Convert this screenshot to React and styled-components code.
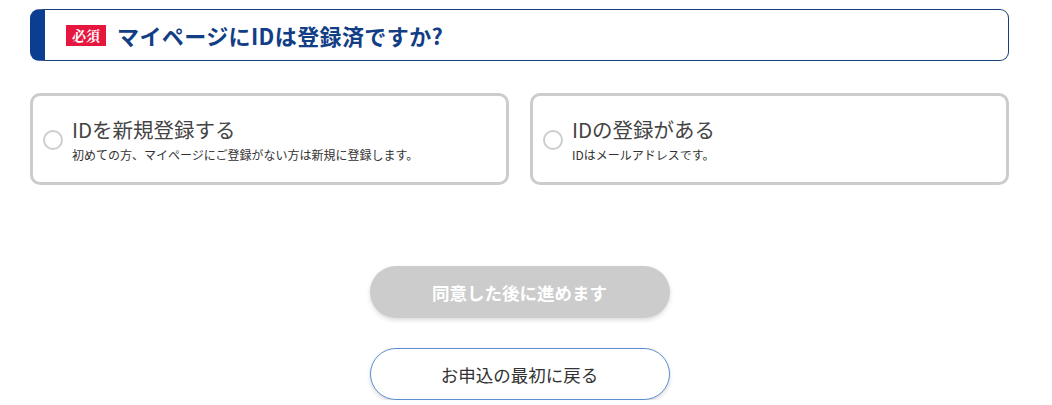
import React from "react";
import styled, { createGlobalStyle } from "styled-components";

const GlobalStyle = createGlobalStyle`
  body {
    margin: 0;
    background: #fff;
    font-family: "Noto Sans CJK JP", "Noto Sans", sans-serif;
    color: #333;
  }
`;

const Page = styled.div`
  width: 979px;
  margin: 9px 0 0 30px;
`;

const Question = styled.div`
  display: flex;
  align-items: center;
  height: 50px;
  border: 1px solid #173f7a;
  border-left: 15px solid #0b3d91;
  border-radius: 9px;
  padding-left: 21px;
  gap: 11px;
`;

const Badge = styled.span`
  display: inline-flex;
  align-items: center;
  justify-content: center;
  width: 40px;
  height: 21px;
  background: #e5173f;
  color: #fff;
  font-family: "Noto Serif CJK JP", "Noto Sans CJK JP", serif;
  font-weight: 700;
  font-size: 14px;
`;

const QuestionText = styled.h2`
  margin: 0;
  font-size: 22px;
  font-weight: 700;
  color: #123e86;
  line-height: 1;
  letter-spacing: 0.4px;
`;

const Options = styled.div`
  display: grid;
  grid-template-columns: 1fr 1fr;
  gap: 21px;
  margin-top: 32px;
`;

const Card = styled.label`
  display: flex;
  align-items: center;
  height: 86px;
  border: 3px solid #cccccc;
  border-radius: 10px;
  padding-left: 10px;
  gap: 9px;
  cursor: pointer;
`;

const Radio = styled.span`
  flex: none;
  width: 16px;
  height: 16px;
  border: 2px solid #cdcdcd;
  border-radius: 50%;
  margin-top: 2px;
`;

const TextBlock = styled.div`
  display: flex;
  flex-direction: column;
  gap: 5px;
`;

const CardTitle = styled.div`
  font-size: 20.5px;
  line-height: 26px;
  color: #444;
  font-weight: 400;
`;

const CardNote = styled.div`
  font-size: 12px;
  line-height: 16px;
  color: #333;
`;

const Actions = styled.div`
  display: flex;
  flex-direction: column;
  align-items: center;
  gap: 30px;
  margin-top: 81px;
`;

const Button = styled.button`
  width: 300px;
  height: 52px;
  border-radius: 26px;
  font-family: inherit;
  font-size: 17.5px;
  cursor: pointer;
  box-shadow: 0 2px 4px rgba(0, 0, 0, 0.15);
  background: ${(p) => (p.$disabled ? "#cccccc" : "#fff")};
  color: ${(p) => (p.$disabled ? "#fff" : "#333")};
  font-weight: ${(p) => (p.$disabled ? 700 : 400)};
  border: ${(p) => (p.$disabled ? "none" : "1px solid #5b8fd2")};
`;

const options = [
  {
    title: "IDを新規登録する",
    note: "初めての方、マイページにご登録がない方は新規に登録します。",
  },
  { title: "IDの登録がある", note: "IDはメールアドレスです。" },
];

export default function App() {
  return (
    <Page>
      <GlobalStyle />
      <Question>
        <Badge>必須</Badge>
        <QuestionText>マイページにIDは登録済ですか?</QuestionText>
      </Question>
      <Options>
        {options.map((o) => (
          <Card key={o.title}>
            <Radio />
            <TextBlock>
              <CardTitle>{o.title}</CardTitle>
              <CardNote>{o.note}</CardNote>
            </TextBlock>
          </Card>
        ))}
      </Options>
      <Actions>
        <Button $disabled>同意した後に進めます</Button>
        <Button>お申込の最初に戻る</Button>
      </Actions>
    </Page>
  );
}
